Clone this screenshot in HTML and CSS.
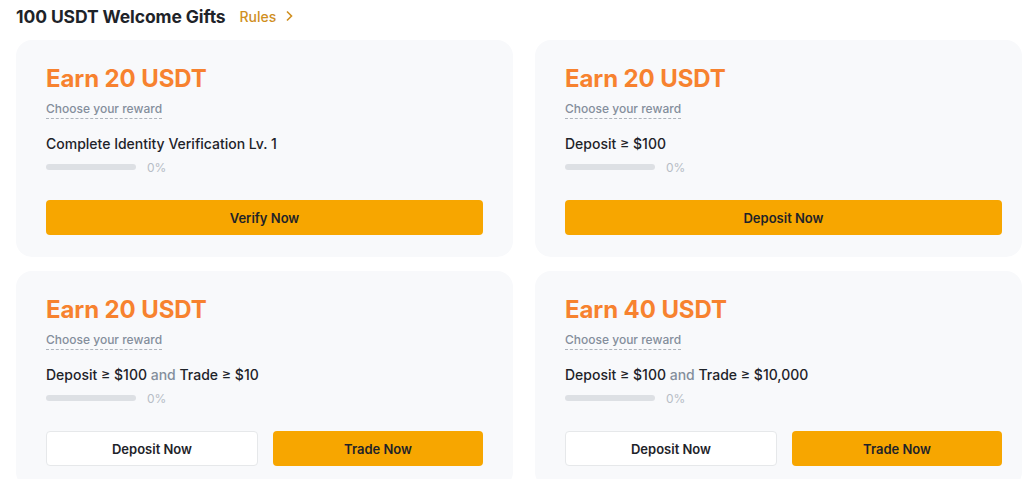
FILE: index.html
```html
<!DOCTYPE html>
<html>
<head>
<meta charset="utf-8">
<link rel="stylesheet" href="styles.css">
</head>
<body>
<div class="page">
  <div class="header">
    <h1 class="title">100 USDT Welcome Gifts</h1>
    <a class="rules">Rules
      <svg class="chev" width="8" height="12" viewBox="0 0 8 12"><path d="M2 1.5 L6.5 6 L2 10.5" fill="none" stroke="currentColor" stroke-width="1.6"/></svg>
    </a>
  </div>
  <div class="grid">
    <div class="card">
      <div class="earn">Earn 20 USDT</div>
      <div class="choose"><span>Choose your reward</span></div>
      <div class="task">Complete Identity Verification Lv. 1</div>
      <div class="progress"><div class="bar"></div><span class="pct">0%</span></div>
      <div class="actions"><button class="btn primary">Verify Now</button></div>
    </div>
    <div class="card card-right">
      <div class="earn">Earn 20 USDT</div>
      <div class="choose"><span>Choose your reward</span></div>
      <div class="task">Deposit ≥ $100</div>
      <div class="progress"><div class="bar"></div><span class="pct">0%</span></div>
      <div class="actions"><button class="btn primary">Deposit Now</button></div>
    </div>
    <div class="card">
      <div class="earn">Earn 20 USDT</div>
      <div class="choose"><span>Choose your reward</span></div>
      <div class="task">Deposit ≥ $100 <span class="and">and</span> Trade ≥ $10</div>
      <div class="progress"><div class="bar"></div><span class="pct">0%</span></div>
      <div class="actions"><button class="btn outline">Deposit Now</button><button class="btn primary">Trade Now</button></div>
    </div>
    <div class="card card-right">
      <div class="earn">Earn 40 USDT</div>
      <div class="choose"><span>Choose your reward</span></div>
      <div class="task">Deposit ≥ $100 <span class="and">and</span> Trade ≥ $10,000</div>
      <div class="progress"><div class="bar"></div><span class="pct">0%</span></div>
      <div class="actions"><button class="btn outline">Deposit Now</button><button class="btn primary">Trade Now</button></div>
    </div>
  </div>
</div>
</body>
</html>
```

FILE: styles.css
```css
* { box-sizing: border-box; }
html, body { margin: 0; padding: 0; background: #fff; overflow: hidden; }
body { font-family: Inter, "Noto Sans", sans-serif; color: #1E2329; }
.page { padding: 5px 0 0 16px; width: 1024px; }
.header { display: flex; align-items: center; gap: 14px; height: 22px; }
.title { margin: 0; font-size: 17.5px; font-weight: 700; letter-spacing: -0.1px; }
.rules { display: flex; align-items: center; gap: 9px; font-size: 14px; font-weight: 500; color: #D08F1F; }
.chev { display: block; }
.grid { display: grid; grid-template-columns: 497px 487px; column-gap: 22px; row-gap: 14px; margin-top: 13px; }
.card { background: #F8F9FB; border-radius: 16px; padding: 23px 30px 22px 30px; height: 217px; }
.card-right { padding-right: 20px; }
.earn { font-size: 24px; font-weight: 700; color: #F7822F; line-height: 32px; letter-spacing: -0.1px; }
.choose { margin-top: 2px; height: 20px; }
.choose span { font-size: 12px; font-weight: 500; color: #848E9C; border-bottom: 1px dashed #AEB4BC; padding-bottom: 2px; }
.task { margin-top: 17px; font-size: 14px; font-weight: 500; line-height: 20px; }
.and { color: #848E9C; }
.progress { display: flex; align-items: center; gap: 11px; margin-top: 3px; height: 20px; }
.bar { width: 90px; height: 6px; border-radius: 3px; background: #DDE0E4; }
.pct { font-size: 12px; color: #B7BDC6; }
.actions { display: flex; gap: 15px; margin-top: 23px; }
.btn { flex: 1; height: 35px; border-radius: 4px; border: none; font-family: inherit; font-size: 13px; font-weight: 600; color: #1E2329; }
.primary { background: #F7A600; }
.outline { background: #fff; border: 1px solid #E6E8EA; }
```
